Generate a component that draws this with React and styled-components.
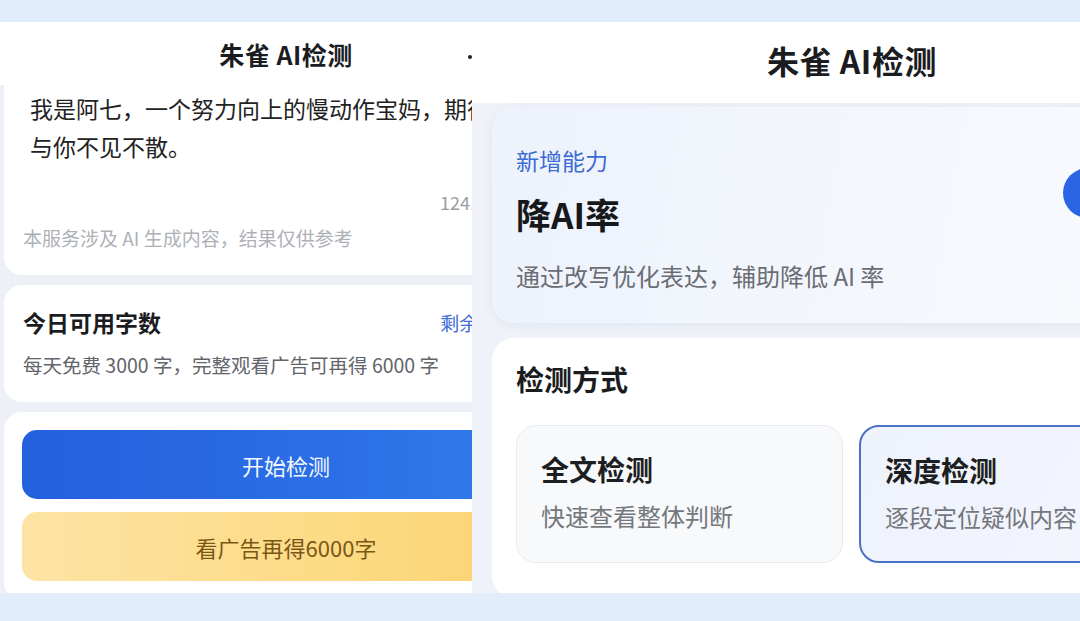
import React from "react";
import styled, { createGlobalStyle } from "styled-components";

const GlobalStyle = createGlobalStyle`
  html, body { margin: 0; padding: 0; }
  body {
    background: #e2edfb;
    font-family: "Noto Sans CJK SC", "Noto Sans", sans-serif;
    color: #1b1c1f;
  }
  * { box-sizing: border-box; }
`;

const Page = styled.div`
  width: 1080px;
  height: 621px;
  padding: 22px 0 28px;
  background: #e2edfb;
  overflow: hidden;
`;

const Screens = styled.div`
  display: flex;
  height: 571px;
`;

const LeftPhone = styled.div`
  width: 472px;
  flex-shrink: 0;
  overflow: hidden;
  background: #edf0f6;
`;

const LeftInner = styled.div`
  width: 572px;
  display: flex;
  flex-direction: column;
`;

const LeftHeader = styled.div`
  position: relative;
  height: 63px;
  padding-top: 1px;
  background: #fff;
  display: flex;
  align-items: center;
  justify-content: center;
  font-size: 25px;
  font-weight: 700;
  letter-spacing: 0.5px;
`;

const MenuDot = styled.span`
  position: absolute;
  left: 468px;
  top: 33px;
  width: 4px;
  height: 4px;
  border-radius: 50%;
  background: #222;
`;

const Card = styled.div`
  margin: ${(p) => p.$mt || 0}px 4px 0;
  background: #fff;
  border-radius: ${(p) => (p.$flatTop ? "0 0 18px 18px" : "18px")};
  padding: ${(p) => p.$pad};
`;

const Essay = styled.p`
  margin: 0;
  padding-left: 7px;
  font-size: 23px;
  line-height: 38px;
  color: #222;
  white-space: nowrap;
`;

const Counter = styled.div`
  margin: 24px 5px 0 0;
  text-align: right;
  font-size: 18px;
  line-height: 26px;
  color: #9a9da3;
`;

const Disclaimer = styled.div`
  margin-top: 9px;
  font-size: 19px;
  line-height: 28px;
  color: #aeb1b7;
`;

const QuotaRow = styled.div`
  display: flex;
  justify-content: space-between;
  align-items: center;
`;

const QuotaTitle = styled.div`
  font-size: 23px;
  font-weight: 700;
  line-height: 34px;
`;

const QuotaLink = styled.div`
  font-size: 19px;
  color: #3a6cd6;
`;

const QuotaRule = styled.div`
  margin-top: 11px;
  font-size: 19.5px;
  line-height: 30px;
  color: #62656b;
  white-space: nowrap;
`;

const ActionButton = styled.div`
  height: 69px;
  border-radius: 15px;
  display: flex;
  align-items: center;
  justify-content: center;
  font-size: 22px;
  background: ${(p) =>
    p.$variant === "ad"
      ? "linear-gradient(90deg, #fde4a4 0%, #fcd97f 70%, #fbd170 100%)"
      : "linear-gradient(90deg, #2360de 0%, #2b6fe6 60%, #337eec 100%)"};
  color: ${(p) => (p.$variant === "ad" ? "#7a5715" : "#f4f8ff")};
  & + & { margin-top: 13px; }
`;

const RightPhone = styled.div`
  flex: 1;
  overflow: hidden;
  background: #eff2f8;
`;

const RightInner = styled.div`
  width: 760px;
  display: flex;
  flex-direction: column;
`;

const RightHeader = styled.div`
  height: 81px;
  padding-bottom: 5px;
  background: #fff;
  display: flex;
  align-items: center;
  justify-content: center;
  font-size: 32px;
  font-weight: 700;
  letter-spacing: 0.5px;
`;

const FeatureCard = styled.div`
  margin: 4px 20px 0;
  height: 216px;
  border-radius: 22px;
  background: linear-gradient(100deg, #edf2fb 0%, #f4f7fd 55%, #f9fbfe 100%);
  box-shadow: 0 2px 10px rgba(120, 140, 180, 0.12);
  padding: 37px 29px 28px 24px;
  display: flex;
  align-items: flex-start;
  justify-content: space-between;
`;

const FeatureText = styled.div`
  display: flex;
  flex-direction: column;
`;

const FeatureTag = styled.div`
  font-size: 23px;
  line-height: 32px;
  color: #3b6bd3;
`;

const FeatureTitle = styled.div`
  margin-top: 15px;
  font-size: 35px;
  line-height: 46px;
  font-weight: 700;
  color: #17181b;
`;

const FeatureDesc = styled.div`
  margin-top: 22px;
  font-size: 24px;
  line-height: 34px;
  color: #6a6d73;
  white-space: nowrap;
`;

const PillButton = styled.div`
  margin-top: 24px;
  width: 120px;
  height: 50px;
  border-radius: 25px;
  background: #2a66e3;
  color: #fff;
  font-size: 20px;
  display: flex;
  align-items: center;
  justify-content: center;
`;

const ModeCard = styled.div`
  margin: 15px 20px 0;
  height: 260px;
  border-radius: 22px;
  background: #fff;
  padding: 21px 24px 0;
`;

const SectionTitle = styled.div`
  font-size: 28px;
  line-height: 40px;
  font-weight: 700;
  color: #1b1c1f;
`;

const ModeGrid = styled.div`
  margin-top: 26px;
  display: grid;
  grid-template-columns: 327px 327px;
  gap: 16px;
`;

const ModeOption = styled.div`
  height: 138px;
  border-radius: 20px;
  padding: 23px 24px 0;
  border: ${(p) => (p.$active ? "2px solid #4a73c6" : "1.5px solid #e7eaef")};
  background: ${(p) =>
    p.$active
      ? "linear-gradient(120deg, #eef2fb 0%, #f3f6fd 100%)"
      : "#f8f9fb"};
`;

const ModeName = styled.div`
  font-size: 28px;
  line-height: 40px;
  font-weight: 700;
  color: #1d1e21;
`;

const ModeDesc = styled.div`
  margin-top: 10px;
  font-size: 24px;
  line-height: 34px;
  color: #74777d;
  white-space: nowrap;
`;

export default function App() {
  return (
    <>
      <GlobalStyle />
      <Page>
        <Screens>
          <LeftPhone>
            <LeftInner>
              <LeftHeader>
                朱雀 AI检测
                <MenuDot />
              </LeftHeader>
              <Card $flatTop $pad="4px 26px 23px 19px">
                <Essay>我是阿七，一个努力向上的慢动作宝妈，期待</Essay>
                <Essay>与你不见不散。</Essay>
                <Counter>1241/10000</Counter>
                <Disclaimer>本服务涉及 AI 生成内容，结果仅供参考</Disclaimer>
              </Card>
              <Card $mt={10} $pad="20px 20px 22px 19px">
                <QuotaRow>
                  <QuotaTitle>今日可用字数</QuotaTitle>
                  <QuotaLink>剩余 3000 字</QuotaLink>
                </QuotaRow>
                <QuotaRule>每天免费 3000 字，完整观看广告可再得 6000 字</QuotaRule>
              </Card>
              <Card $mt={10} $pad="18px 18px 20px">
                <ActionButton>开始检测</ActionButton>
                <ActionButton $variant="ad">看广告再得6000字</ActionButton>
              </Card>
            </LeftInner>
          </LeftPhone>
          <RightPhone>
            <RightInner>
              <RightHeader>朱雀 AI检测</RightHeader>
              <FeatureCard>
                <FeatureText>
                  <FeatureTag>新增能力</FeatureTag>
                  <FeatureTitle>降AI率</FeatureTitle>
                  <FeatureDesc>通过改写优化表达，辅助降低 AI 率</FeatureDesc>
                </FeatureText>
                <PillButton>去体验</PillButton>
              </FeatureCard>
              <ModeCard>
                <SectionTitle>检测方式</SectionTitle>
                <ModeGrid>
                  <ModeOption>
                    <ModeName>全文检测</ModeName>
                    <ModeDesc>快速查看整体判断</ModeDesc>
                  </ModeOption>
                  <ModeOption $active>
                    <ModeName>深度检测</ModeName>
                    <ModeDesc>逐段定位疑似内容</ModeDesc>
                  </ModeOption>
                </ModeGrid>
              </ModeCard>
            </RightInner>
          </RightPhone>
        </Screens>
      </Page>
    </>
  );
}
